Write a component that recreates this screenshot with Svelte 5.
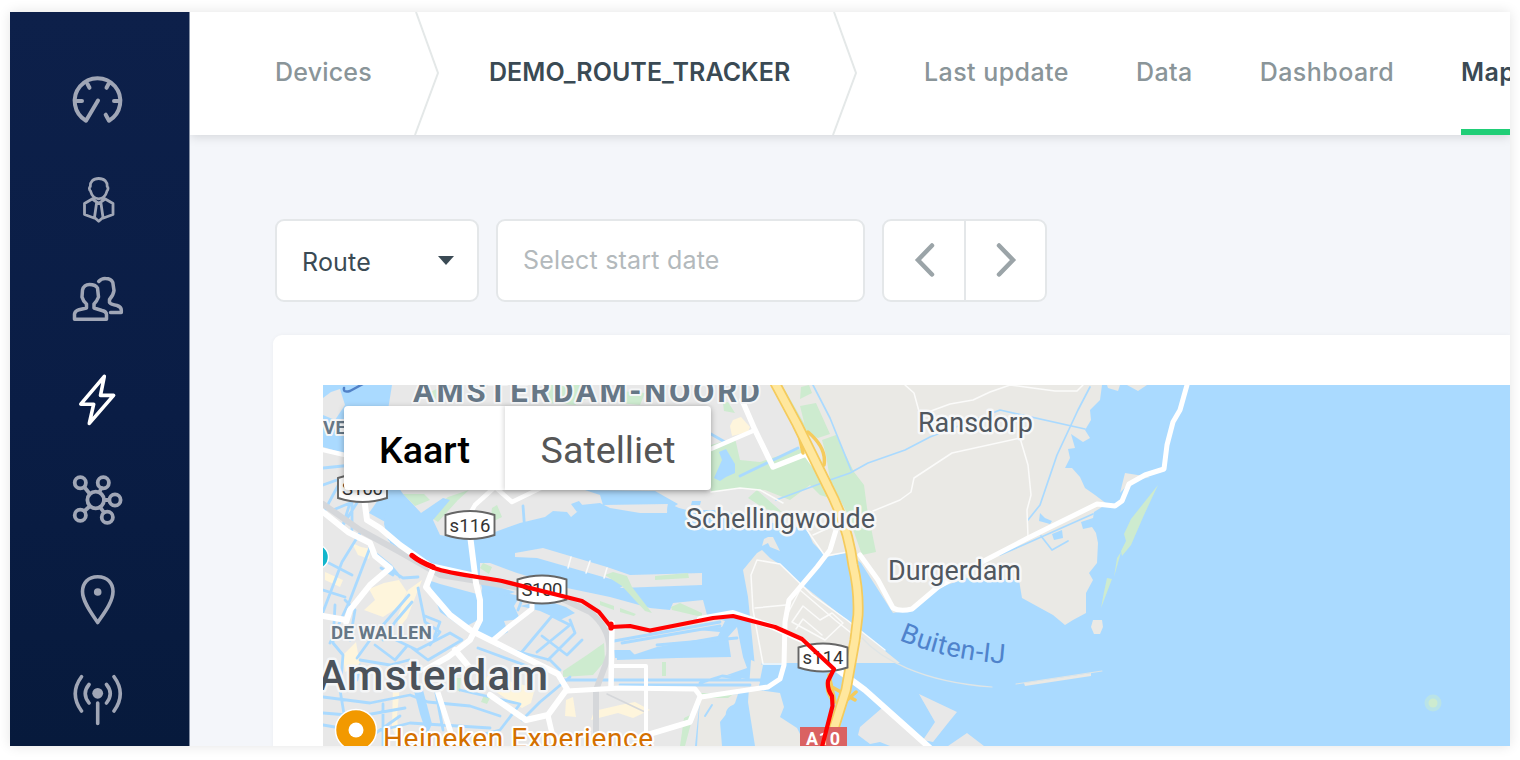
<script>
  let mode = $state('Kaart')
  let tab = $state('Map')

  const tabs = ['Last update', 'Data', 'Dashboard', 'Map']

  const icons = [
    {
      name: 'dashboard',
      width: 4,
      d: 'M38.7 44.7L42 50.7A22.8 22.8 0 1 0 19 50.7L31 30.5M9 31h6M53 31h-6M20.5 14l2 3.8M41.5 14l-2 3.8'
    },
    {
      name: 'client',
      width: 2.8,
      d: 'M31.7 8.5C26 8.5 23 12 23.3 16.5C21.8 17 22.3 20 23.5 21C24.5 25 27.5 28.5 31.7 28.8C36 28.5 39 25 40 21C41 20 41.6 17 40.2 16.5C40.5 12 37.5 8.5 31.7 8.5zM26 28.5L17.5 33.5V44.5L27 48M37.4 28.5L46 33.5V44.5L36.5 48M26 29.5L31.7 33.5L37.4 29.5M29.5 33.5L27.5 47.5L31.7 51.3L36 47.5L34 33.5z'
    },
    {
      name: 'users',
      width: 3.5,
      d: 'M7.5 49.3V44Q8 41 12 39.7L19.5 38V34Q16 31 15 27L15.5 20Q17 14.5 22.5 14.5Q28.5 14.5 30.5 18L31.5 27Q30 31 27 34V38L35 40.5Q39.5 41.5 39.5 44.5V49.3zM31.7 11.5Q34.5 8.3 38.5 8.5Q44 8.5 45.8 12.5L47 20.5Q46.5 25 42.5 29.5V32.5Q44 34.5 50 35.5Q54.3 37 54.3 40V42.6H43.5'
    },
    { name: 'devices', width: 3.6, active: true, d: 'M37.3 6.3L13.8 34.2H26.7L22.3 53.4L46.6 25.4H33.5z' },
    {
      name: 'network',
      width: 3.8,
      d: 'M17.5 17.2L22.5 23.5M34.5 18L32.5 22M37 30H42M33 37L37 42.5M22.5 36.5L17.5 41',
      rings: [[28.7, 30, 8.3], [13.3, 12.7, 5.6], [36.3, 12.7, 5.6], [48, 30, 5.6], [40.3, 47.3, 5.6], [13.3, 45.3, 5.6]]
    },
    {
      name: 'locations',
      width: 3.6,
      d: 'M30.7 6.7C21 6.7 15.5 13 15.5 21.5C15.5 32 25 44 30.7 52.5C36.5 44 46 32 46 21.5C46 13 40.5 6.7 30.7 6.7z',
      dot: [30.7, 22, 3.8]
    },
    {
      name: 'gateways',
      width: 3.6,
      d: 'M30.7 33V53.5M22 14.5Q14.5 23.5 22 33M39.5 14.5Q47 23.5 39.5 33M14.5 6.7Q2 23.5 14.5 41M47 6.7Q59.5 23.5 47 41',
      dot: [30.7, 23.3, 5.4]
    }
  ]

  // areas, drawn from the bottom up
  const rural = [
    'M713 385H1102L1100 400L1090 410L1091 420L1085 430L1090 438L1083 442L1071 434L1075 448L1068 449L1070 458L1065 468H1072L1080 477L1085 488L1095 495L1107 504L1094 512L1093 518L1081 522L1083 529L1092 527L1096 533L1098 543L1097 563L1089 573L1093 580L1086 593V613L1073 620L1065 625L1053 615L1022 598L1019 580L970 577L938 588L915 609L893 613L861 563L848 552L827 557L813 543L807 530L780 523L713 508L711 492z',
    'M1107 385H1120L1118 391L1108 388zM1127 385H1147L1138 391z',
    'M1125 473L1150 477L1130 482L1120 493zM1093 620H1102L1103 627L1100 634H1094L1091 627z',
    'M743 570L757 553L762 550L770 558L782 566L800 583L847 620L900 663L887 663H763L755 667L748 597z',
    'M751 660L763 665L758 690L780 693L784 707L780 717L797 728L806 746H755L748 702z',
    'M1024 683L1091 673V676L1025 686z',
    'M764 539L768 537H773L780 551L770 547L768 543L762 546z',
    'M700 698L738 694L735 703L720 722L722 746H697z'
  ]

  const urban = [
    'M392 385H774L800 430L814 462L806 450L775 470L711 492L740 488L760 492L780 503L780 525L740 514L713 510L687 510L679 508L668 503L667 513H640L610 508L600 503L581 505L577 512L571 517L567 512L553 511L545 517L520 523L495 532L443 541L433 537L425 518L403 494L380 460z',
    'M323 447L350 455L368 465L385 490L369 513L387 523L390 543L413 557L447 570L480 576V563L490 563L517 573L567 588L610 597L650 608L670 610L673 603L703 600L707 615L725 621L722 627L697 630L720 632L718 636L657 647L633 655L617 650V660L677 658L731 657L728 637L737 627L743 657L747 668L727 675L760 682L758 688L720 693L700 698L695 746H323z',
    'M515 553L543 548L607 567L630 575L702 573V585L620 588L627 583L603 577L537 558L515 557z',
    'M860 727L882 708L927 746H890L880 742L870 744L858 735zM919 694L957 712L948 723L933 742L923 740L935 722zM967 733L984 746H948z',
    'M331 392L340 389L345 405L335 420L323 415V398z'
  ]

  const waters = [
    'M428 580L440 584L477 594L478 620L463 628L440 612z',
    'M482 588L520 596L514 606L520 619L504 621L508 632L492 641L477 634z',
    'M545 600L566 607L575 613L560 620L540 611L520 606z',
    'M388 492L403 494L421 513L443 498L450 500L433 520L440 535L468 540L470 576L446 570L405 552L388 540L384 524z',
    'M714 478L722 460L719 452L726 449L735 464V473L726 477L720 481z',
    'M571 504L579 501L583 506L577 512zM603 505L600 495L585 490L655 491L678 504L667 511L668 504zM692 501H701L700 505H691z',
    'M1040 513L1045 518L1052 521L1050 524L1039 521zM1052 534L1062 530L1063 538L1054 540z',
    'M480 581L515 592L504 596L483 591z',
    'M614 650L630 650L635 655H650L648 658H615z',
    'M413 687L423 690L432 724L427 735L420 714z'
  ]

  const greens = [
    'M773 385H782L808 430H800zM801 387L809 385L812 393L800 399zM800 406L816 403L830 434L818 438L807 434zM822 440L836 435L854 472L864 485L867 508L876 552L862 555L848 515L830 480L826 455z',
    'M711 445L735 438L740 460L760 462L800 449L811 452L830 480L836 500L820 495L810 485L790 500L765 490L740 488L711 492z',
    'M403 494H424L430 500L415 506zM427 515L448 497L469 490L458 500L438 522zM492 508L497 505L502 517L490 523z',
    'M723 403L728 402L735 413L724 411zM748 498L757 490L782 512L765 509z',
    'M480 568L483 563L492 567L489 574zM605 575L613 572L627 576L632 587L652 613L645 611L622 586zM655 576L688 573L689 578L655 580zM600 601L614 606V610L600 605zM620 608L636 614L634 616L620 612zM671 607L680 603L702 613V617L672 610z',
    'M563 671L587 655L604 643L605 661L593 675L563 677zM484 695L490 698L487 704L481 702zM662 662H666V676H662zM697 693H735L728 698H700zM684 718L690 715L694 712L685 746H680z',
    'M1158 485L1144 515L1131 545L1122 556L1121 551L1126 541L1124 534L1131 519zM1117 558L1121 552L1114 577zM1107 578L1112 579L1101 608L1104 592z',
    'M455 678H461L460 692L455 689zM547 385H580L592 396L575 405L550 403zM430 392L444 386L438 402zM620 391L645 393L640 405L619 403z'
  ]

  const yellows = [
    'M733 420L741 417L750 427L748 432L732 436L730 426z',
    'M352 543L361 547L371 549L369 559L358 555zM325 572L343 580L340 587L325 580z',
    'M369 589L384 583L399 580L407 592L400 606L383 617L364 610L375 600zM408 590L422 580L407 618L399 628L397 618z',
    'M483 683L494 666L500 679L535 688L531 703L522 708L505 698zM594 711L620 705L635 702L650 710L633 718L618 713L591 720zM566 700L573 697L576 717L565 716zM393 685H400L397 715L399 743L392 728zM343 655L356 642L360 665L345 672z'
  ]

  // narrow canals of the centre and the docks
  const canals = [
    'M323 468L372 463M323 485L365 470M341 480L325 510M333 510L350 503L343 525L365 490M352 500V530M360 533L342 562L323 612M371 545L350 600L330 643M323 560L352 575M323 590L345 597',
    'M335 605L333 643L343 655L341 680M345 600L355 610L350 640M374 552L390 565L400 577M390 570L403 578L418 577M381 568L393 575',
    'M409 595L370 640L357 658M412 602L395 622L383 640M418 588L425 622L440 632L430 645M396 640L417 650L450 633L462 640L428 660L412 648M375 645L395 660L407 646',
    'M360 660L390 665L409 660M360 665L357 680M425 616L440 622L433 640',
    'M323 697L370 703L410 695L428 702L470 706L500 716M323 713L360 716L405 708M323 725L370 733L410 723L490 728M340 690L345 720M383 704V746M373 735L400 716M435 688L443 730M460 690L520 704L500 730L480 735',
    'M525 592L518 610M521 653L552 616L570 625L537 652M542 636L567 655L582 640M500 647L550 660L560 670M478 648L530 667M570 620L575 633L548 660',
    'M614 641L720 622M622 643L720 626M657 645L737 638M560 680H760M620 685H750M570 677L540 702L522 720M740 678L722 676L700 683',
    'M711 434L725 442M798 448L740 476M523 506L525 533'
  ]

  const streams = [
    'M776 500L830 480L850 473L868 463L905 450L930 437L1000 410L1085 429M1090 387L1078 410L1057 455L1040 505L1028 520',
    'M1093 514L1030 542L1000 555M1041 536L1052 550L1068 541M813 385L830 418L851 470'
  ]

  const lanes = [
    'M905 385L914 393L920 415L950 404L973 400L990 392L1010 385L1055 391H1077L1083 385M873 511L900 500L911 492L914 478L952 453L1020 438L1028 465L1031 495L1027 510L1028 537',
    'M711 492L740 488L760 490L783 503M807 530L825 556L848 552M813 535L835 525',
    'M751 575L757 560L780 564L812 595L847 620L885 650M751 575L753 610L763 664H785V643M755 608L786 605M788 613L800 590L835 620L860 640M792 622L803 606L820 620L832 613L843 623L825 640L792 622M796 629L803 619L822 635',
    'M571 557L568 568M590 561L586 573M607 568L604 578'
  ]

  const roads = [
    { w: 6, d: 'M323 512L348 532L370 543L375 556L390 568L370 585L350 610L346 622M346 620L323 616M363 490L367 520L380 528L400 545L430 566L475 576' },
    { w: 6, d: 'M470 535L476 583L480 600V620L470 640L448 657L425 670M433 569L426 587L450 615L470 630L492 641L558 674L567 689L548 715L526 720L490 695M455 650L470 668' },
    { w: 5, d: 'M492 641L510 626L532 609V603M567 691L620 688L695 689L701 697L768 687L780 679L784 665L785 622L789 600L817 567L830 550L836 530L835 508' },
    { w: 5.5, d: 'M612 623L611 688M438 693L450 730L453 746M548 716L555 746M700 697L690 722L640 737' },
    { w: 4, d: 'M614 666H646V735' },
    { w: 4.5, d: 'M471 512L475 505L495 487L512 502L545 486M323 450L345 455M711 449L755 430' },
    { w: 5.5, d: 'M742 400L755 430L773 467L806 454L825 480L838 515' },
    { w: 6, d: 'M700 619L733 613L773 627L802 640L838 670L865 690L930 748' },
    { w: 5, d: 'M860 555L878 580L893 608Q900 612 912 609L938 587L980 563L1028 538L1097 504L1115 506L1122 501L1129 484L1145 475L1164 469L1167 445L1173 422L1180 410L1187 385' }
  ]

  const a10 = 'M775 383L797 424L828 487Q848 525 853 565Q859 590 858 615L855 640L846 690L834 728'
  const track = 'M412 555.5C417 560 425 563 434 568C450 574 480 577 502 581L582 601L599 612L611 627L630 626L650 630.5L713 618L733 616L775 627L802 639L834 669L828 681Q827 689 832 696L832.5 706L822 747'

  const shields = [
    { x: 362.5, y: 488, text: 'S100' },
    { x: 470, y: 525, text: 's116' },
    { x: 542, y: 589.5, text: 'S100' },
    { x: 823, y: 657.5, text: 's114' }
  ]

  const places = [
    { x: 413, y: 401.5, w: 347, size: 31, text: 'AMSTERDAM-NOORD', kind: 'district' },
    { x: 323, y: 433.5, w: 23, size: 18.5, text: 'VE', kind: 'district' },
    { x: 331, y: 639, w: 101, size: 19, text: 'DE WALLEN', kind: 'district' },
    { x: 918, y: 432, w: 115, size: 27, text: 'Ransdorp', kind: 'town' },
    { x: 686, y: 528, w: 189, size: 27, text: 'Schellingwoude', kind: 'town' },
    { x: 888, y: 580, w: 133, size: 27, text: 'Durgerdam', kind: 'town' },
    { x: 318, y: 690, w: 230, size: 42, text: 'Amsterdam', kind: 'city' },
    { x: 383, y: 748, w: 270, size: 28, text: 'Heineken Experience', kind: 'poi' }
  ]
</script>

<div class="app">
  <nav class="sidebar">
    {#each icons as icon}
      <svg class="icon" class:active={icon.active} viewBox="0 0 60 60" stroke-width={icon.width} aria-label={icon.name}>
        <path d={icon.d} />
        {#each icon.rings ?? [] as [cx, cy, r]}
          <circle {cx} {cy} {r} />
        {/each}
        {#if icon.dot}
          <circle class="dot" cx={icon.dot[0]} cy={icon.dot[1]} r={icon.dot[2]} />
        {/if}
      </svg>
    {/each}
  </nav>

  <div class="main">
    <header>
      <span class="crumb devices">Devices</span>
      <svg class="chevron" viewBox="0 0 26 123"><path d="M2 0L24 61L1 123" /></svg>
      <span class="crumb current">DEMO_ROUTE_TRACKER</span>
      <svg class="chevron" viewBox="0 0 26 123"><path d="M2 0L24 61L1 123" /></svg>
      <div class="tabs">
        {#each tabs as name}
          <button class="tab" class:selected={tab === name} onclick={() => (tab = name)}>{name}</button>
        {/each}
      </div>
    </header>

    <section class="content">
      <div class="toolbar">
        <div class="box select">
          <span>Route</span>
          <svg width="16" height="9" viewBox="0 0 16 9"><path d="M0 0H16L8 9z" /></svg>
        </div>
        <div class="box date">Select start date</div>
        <div class="box pager">
          <button aria-label="Previous"><svg viewBox="0 0 22 34"><path d="M18 2.5L4 17L18 31.5" /></svg></button>
          <button aria-label="Next"><svg viewBox="0 0 22 34"><path d="M4 2.5L18 17L4 31.5" /></svg></button>
        </div>
      </div>

      <div class="card">
        <div class="map">
          <svg class="canvas" viewBox="323 385 1187 361" width="1187" height="361">
            <rect x="323" y="385" width="1187" height="361" fill="#aadaff" />
            <g fill="#eae9e5">{#each rural as d}<path {d} />{/each}</g>
            <g fill="#e8e8e8">{#each urban as d}<path {d} />{/each}</g>
            <g fill="#cdebcf">{#each greens as d}<path {d} />{/each}</g>
            <g fill="#fef5dc">{#each yellows as d}<path {d} />{/each}</g>
            <g fill="#aadaff">{#each waters as d}<path {d} />{/each}</g>
            <g class="line" stroke="#aadaff" stroke-width="2.8">{#each canals as d}<path {d} />{/each}</g>
            <g class="line" stroke="#aadaff" stroke-width="1.7">{#each streams as d}<path {d} />{/each}</g>
            <path class="line" d="M323 504L360 530L400 552L440 575L465 579L550 593L590 612Q612 630 609 655L596 690V746" stroke="#d5d7da" stroke-width="6" />
            <path class="line" d="M607 694L645 712" stroke="#d5d7da" stroke-width="1.5" />
            <path class="line" d="M862 638C880 658 920 682 992 687M1016 684L1102 671" stroke="#dfe5e6" stroke-width="1.2" />
            <path class="line" d="M344 388Q343 393 350 391L363 384" stroke="#5181c7" stroke-width="2.5" />
            <path class="line" d="M736 705Q725 708 727 718M712 705L705 716" stroke="#aadaff" stroke-width="2" />
            <g class="line" stroke="#fbfbfa" stroke-width="1.5">{#each lanes as d}<path {d} />{/each}</g>
            {#each roads as road}
              <path class="line" d={road.d} stroke="#fff" stroke-width={road.w} />
            {/each}
            <path class="line" d="M798 430L803 453M808 432Q827 448 824 465M829 675L835 702M856 692L838 708M832 687L855 700M828 680Q825 692 834 702" stroke="#f5cb5c" stroke-width="3.5" />
            <path class="line" d={a10} stroke="#f5cb5c" stroke-width="11" />
            <path class="line" d={a10} stroke="#ffe79e" stroke-width="7.5" />
            <circle cx="1433" cy="703" r="8.5" fill="#b9e3e8" />
            <circle cx="1433" cy="703" r="4.5" fill="#cdebcf" />

            {#each shields as s}
              <g transform="translate({s.x} {s.y})">
                <path d="M-24.5 -10Q0 -18 24.5 -10V10Q0 18 -24.5 10z" fill="#fff" stroke="#666" stroke-width="1.9" />
                <text class="shield" y="6.5" textLength="41" text-anchor="middle">{s.text}</text>
              </g>
            {/each}
            <rect x="800" y="727" width="47" height="25" fill="#da6262" />
            <text class="motorway" x="806" y="745" textLength="34">A10</text>

            {#each places as p}
              <text class={p.kind} x={p.x} y={p.y} font-size={p.size} textLength={p.w}>{p.text}</text>
            {/each}
            <path id="bay" d="M899 640Q945 660 1010 664" fill="none" />
            <text class="bay" textLength="109"><textPath href="#bay">Buiten-IJ</textPath></text>

            <circle cx="316" cy="557" r="12.5" fill="#12b5cb" stroke="#fff" stroke-width="1.5" />
            <circle cx="356" cy="730" r="20.5" fill="#f29900" stroke="#fff" stroke-width="1.5" />
            <circle cx="356" cy="730" r="7.5" fill="#fff" />
            <path class="line" d={track} stroke="#f00" stroke-width="4.2" />
            <path class="line" d="M412 555.5Q420 562 433 567M611 624V628" stroke="#f00" stroke-width="5.2" />
          </svg>

          <div class="map-type">
            {#each ['Kaart', 'Satelliet'] as name}
              <button class:chosen={mode === name} onclick={() => (mode = name)}>{name}</button>
            {/each}
          </div>
        </div>
      </div>
    </section>
  </div>
</div>

<style>
  :global(body) {
    background: #fff;
    overflow: hidden;
  }

  button {
    background: none;
    border: 0;
    font: inherit;
    letter-spacing: inherit;
    margin: 0;
    padding: 0;
    white-space: nowrap;
  }

  .app {
    box-shadow: 0 0 12px rgba(0, 0, 0, .11);
    box-sizing: border-box;
    color: #3a4a54;
    display: flex;
    font-family: Inter, sans-serif;
    font-size: 25px;
    height: 734px;
    letter-spacing: .2px;
    margin: 12px 10px 14px;
    overflow: hidden;
    width: 1500px;
  }

  .sidebar {
    background: linear-gradient(#0d204a, #0a1d45 55%, #071a3c);
    border-right: 1px solid #8590a5;
    box-sizing: border-box;
    display: flex;
    flex: none;
    flex-direction: column;
    gap: 40px;
    padding: 58px 0 0 57px;
    width: 180px;
  }

  .icon {
    fill: none;
    flex: none;
    height: 60px;
    stroke: #a0a6b6;
    stroke-linecap: round;
    stroke-linejoin: round;
    width: 60px;
  }

  .icon.active {
    stroke: #fff;
  }

  .icon .dot {
    fill: #a0a6b6;
    stroke: none;
  }

  .main {
    background: #f4f6fa;
    flex: 1;
    min-width: 0;
    overflow: hidden;
  }

  header {
    background: #fff;
    box-shadow: 0 2px 10px rgba(0, 0, 0, .13);
    display: flex;
    font-weight: 500;
    height: 123px;
    line-height: 121px;
    padding-left: 85px;
    position: relative;
  }

  .crumb,
  .chevron {
    flex: none;
  }

  .crumb {
    color: #8a9599;
    white-space: nowrap;
  }

  .devices {
    width: 139px;
  }

  .current {
    box-sizing: border-box;
    color: #3a4a54;
    font-weight: 600;
    letter-spacing: .05px;
    padding-left: 49px;
    width: 392px;
  }

  .chevron {
    fill: none;
    height: 123px;
    stroke: #e4e8e8;
    stroke-width: 2;
    width: 26px;
  }

  .tabs {
    display: flex;
    gap: 67px;
    letter-spacing: .44px;
    padding-left: 66px;
  }

  .tab {
    box-sizing: border-box;
    color: #8a9599;
    height: 123px;
    line-height: 119px;
    padding-bottom: 2px;
  }

  .tab.selected {
    box-shadow: inset 0 -6px #20ce77;
    color: #3a4a54;
    font-weight: 600;
  }

  .content {
    padding: 84px 0 0 83px;
  }

  .toolbar {
    display: flex;
    gap: 17px;
    height: 83px;
    margin: 0 0 33px 2px;
  }

  .box {
    align-items: center;
    background: #fff;
    border: 2px solid #e4e7e9;
    border-radius: 9px;
    box-sizing: border-box;
    display: flex;
  }

  .select {
    justify-content: space-between;
    padding: 3px 23px 0 25px;
    width: 204px;
  }

  .select svg {
    fill: #3a4a54;
    margin-bottom: 4px;
  }

  .date {
    color: #b3b9bc;
    padding: 0 0 2px 25px;
    width: 369px;
  }

  .pager {
    width: 165px;
  }

  .pager button {
    flex: 1;
    height: 100%;
    padding: 0 0 2px 2px;
  }

  .pager button + button {
    border-left: 2px solid #e4e7e9;
  }

  .pager svg {
    display: block;
    fill: none;
    height: 34px;
    margin: 0 auto;
    stroke: #9ba4a8;
    stroke-linecap: round;
    stroke-width: 4.5;
    width: 22px;
  }

  .card {
    background: #fff;
    border-radius: 9px 0 0;
    box-shadow: 0 0 4px rgba(0, 0, 0, .04);
    height: 500px;
    padding: 50px 0 0 50px;
  }

  .map {
    font-family: Roboto, sans-serif;
    letter-spacing: 0;
    position: relative;
  }

  .canvas {
    display: block;
  }

  .line {
    fill: none;
    stroke-linecap: round;
    stroke-linejoin: round;
  }

  text {
    paint-order: stroke;
    stroke-linejoin: round;
  }

  .district {
    fill: #667786;
    font-weight: 700;
    stroke: #f5f6f7;
    stroke-width: 4;
  }

  .town {
    fill: #50575f;
    stroke: #f7f8f9;
    stroke-width: 5;
  }

  .city {
    fill: #4b525a;
    font-weight: 500;
    stroke: #f5f6f7;
    stroke-width: 5;
  }

  .poi {
    fill: #d47000;
    stroke: #fff;
    stroke-width: 4;
  }

  .bay {
    fill: #4f83cc;
    font-size: 27px;
  }

  .shield {
    fill: #333;
    font-size: 18.5px;
  }

  .motorway {
    fill: #fff;
    font-size: 18px;
    font-weight: 700;
  }

  .map-type {
    background: #fff;
    border-radius: 4px;
    box-shadow: 0 2px 6px rgba(0, 0, 0, .3);
    display: flex;
    font-size: 37.7px;
    left: 21px;
    position: absolute;
    top: 21px;
  }

  .map-type button {
    box-sizing: border-box;
    color: #565656;
    height: 84px;
    padding-top: 4px;
    width: 206px;
  }

  .map-type button + button {
    box-shadow: -2px 0 4px rgba(0, 0, 0, .12);
  }

  .map-type .chosen {
    color: #000;
    font-weight: 500;
    width: 161px;
  }
</style>
